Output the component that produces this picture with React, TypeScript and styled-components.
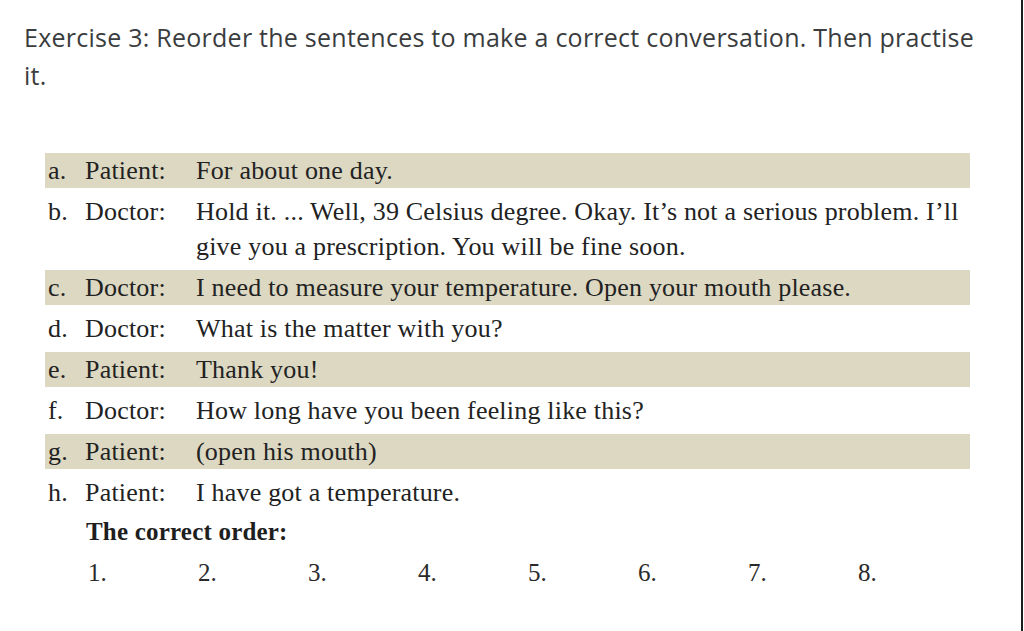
import React from "react";
import styled, { createGlobalStyle } from "styled-components";

const Global = createGlobalStyle`
  html, body { margin: 0; padding: 0; background: #fff; }
  body { width: 1024px; height: 631px; overflow: hidden; }
`;

const Page = styled.div`
  box-sizing: border-box;
  width: 1023px;
  height: 631px;
  border-right: 2px solid #1c1c1c;
  padding: 18px 0 0 24px;
`;

const Heading = styled.p`
  margin: 0;
  width: 955px;
  font-family: "Open Sans", "Noto Sans", sans-serif;
  font-size: 25px;
  letter-spacing: 0.25px;
  line-height: 38px;
  color: #3a3c3e;
`;

const Table = styled.div`
  margin: 59px 0 0 21px;
  width: 925px;
  font-family: "Liberation Serif", "Times New Roman", serif;
  font-size: 26px;
  letter-spacing: 0.2px;
  color: #222;
`;

const Row = styled.div<{ $shaded?: boolean }>`
  display: grid;
  grid-template-columns: 37px 111px 1fr;
  padding-left: 3px;
  line-height: 35px;
  margin-bottom: 6px;
  background: ${(p) => (p.$shaded ? "#dcd8c2" : "transparent")};
`;

const Cell = styled.span``;

const OrderTitle = styled.div`
  margin: -2px 0 0 41px;
  font-family: "Liberation Serif", "Times New Roman", serif;
  font-weight: bold;
  font-size: 25px;
  line-height: 35px;
  color: #1e1e1e;
`;

const Numbers = styled.div`
  display: grid;
  grid-template-columns: repeat(8, 110px);
  margin: 6px 0 0 64px;
  font-family: "Liberation Serif", "Times New Roman", serif;
  font-size: 25px;
  line-height: 35px;
  color: #2a2a2a;
`;

const rows: [string, string, string][] = [
  ["a.", "Patient:", "For about one day."],
  [
    "b.",
    "Doctor:",
    "Hold it. ... Well, 39 Celsius degree. Okay. It\u2019s not a serious problem. I\u2019ll give you a prescription. You will be fine soon.",
  ],
  ["c.", "Doctor:", "I need to measure your temperature. Open your mouth please."],
  ["d.", "Doctor:", "What is the matter with you?"],
  ["e.", "Patient:", "Thank you!"],
  ["f.", "Doctor:", "How long have you been feeling like this?"],
  ["g.", "Patient:", "(open his mouth)"],
  ["h.", "Patient:", "I have got a temperature."],
];

export default function App() {
  return (
    <>
      <Global />
      <Page>
        <Heading>
          Exercise 3: Reorder the sentences to make a correct conversation. Then practise it.
        </Heading>
        <Table>
          {rows.map(([l, s, t], i) => (
            <Row key={l} $shaded={i % 2 === 0}>
              <Cell>{l}</Cell>
              <Cell>{s}</Cell>
              <Cell>{t}</Cell>
            </Row>
          ))}
          <OrderTitle>The correct order:</OrderTitle>
        </Table>
        <Numbers>
          {[1, 2, 3, 4, 5, 6, 7, 8].map((n) => (
            <span key={n}>{n}.</span>
          ))}
        </Numbers>
      </Page>
    </>
  );
}
